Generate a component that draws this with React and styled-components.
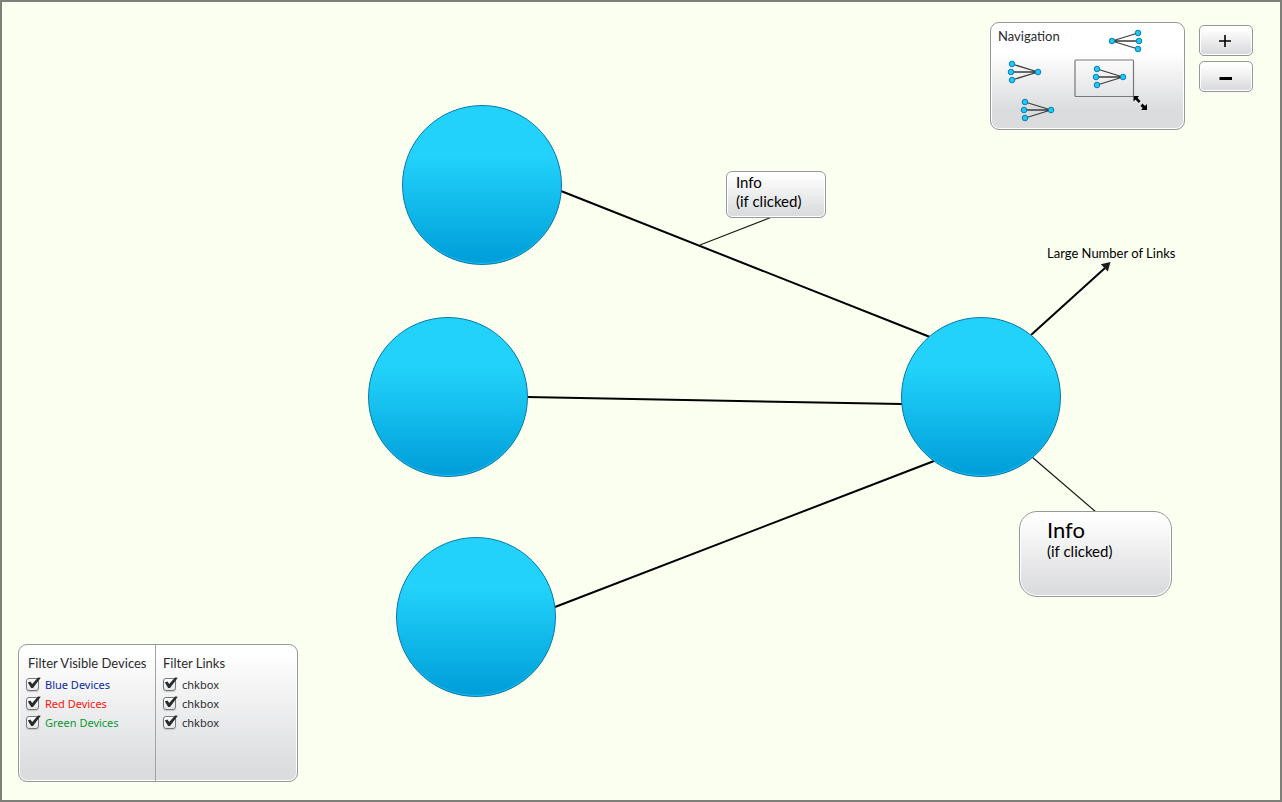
import React from "react";
import styled, { createGlobalStyle } from "styled-components";

const GlobalStyle = createGlobalStyle`
  *, *::before, *::after { box-sizing: border-box; }
  body {
    margin: 0;
    background: #fbfff0;
    color: #000;
    font: 13px/19px Lato, "Open Sans", sans-serif;
  }
`;

const Screen = styled.main`
  position: relative;
  display: flex;
  flex-direction: column;
  justify-content: space-between;
  min-height: 100vh;
  padding: 20px 27px 18px 16px;
  border: 2px solid #7e7f79;
  overflow: hidden;
`;

const Diagram = styled.section`
  position: absolute;
  inset: -2px;
`;

const Links = styled.svg`
  position: absolute;
  top: 0;
  left: 0;
  width: 100%;
  height: 100%;
`;

const Device = styled.button`
  position: absolute;
  left: ${(p) => p.$x}px;
  top: ${(p) => p.$y}px;
  width: 160px;
  height: 160px;
  padding: 0;
  border: 1px solid #0679ab;
  border-radius: 50%;
  background: linear-gradient(#22d2fa 32%, #009fda 97%);
  box-shadow: inset 0 -2px 1px -1px #1fc4f0;
  cursor: pointer;
`;

const Caption = styled.span`
  position: absolute;
  left: ${(p) => p.$x}px;
  top: ${(p) => p.$y}px;
  white-space: nowrap;
`;

const Panel = styled.div`
  border: 1px solid #96979a;
  border-radius: ${(p) => p.$radius || 9}px;
  background: linear-gradient(#fff ${(p) => p.$from || 5}%, #dbdcde ${(p) => p.$to || 92}%);
  box-shadow: inset 0 0 0 1px #fff;
`;

const InfoCard = styled(Panel)`
  position: absolute;
  left: ${(p) => p.$x}px;
  top: ${(p) => p.$y}px;
  width: ${(p) => (p.$large ? 153 : 100)}px;
  height: ${(p) => (p.$large ? 86 : 47)}px;
  padding: ${(p) => (p.$large ? "5px 27px" : "1px 9px")};
  font-size: 15px;
`;

const InfoTitle = styled.strong`
  display: block;
  font-weight: 400;
  font-size: ${(p) => (p.$large ? 22 : 15)}px;
  line-height: ${(p) => (p.$large ? 25 : 19)}px;
`;

const InfoNote = styled.span`
  display: block;
`;

const TopTools = styled.header`
  position: relative;
  display: flex;
  justify-content: flex-end;
  align-items: flex-start;
  gap: 14px;
`;

const NavigationPanel = styled(Panel)`
  position: relative;
  width: 195px;
  height: 108px;
  padding: 4px 7px;
`;

const Title = styled.h2`
  margin: 0;
  color: #2b2b2d;
  font-size: 13px;
  font-weight: 400;
  line-height: 19px;
  white-space: nowrap;
`;

const MiniMap = styled.svg`
  position: absolute;
  top: -1px;
  left: -1px;
`;

const ZoomControls = styled.div`
  display: flex;
  flex-direction: column;
  gap: 5px;
  padding-top: 3px;
`;

const ZoomButton = styled.button`
  display: grid;
  place-items: center;
  width: 54px;
  height: 31px;
  padding: 0;
  border: 1px solid #96979a;
  border-radius: 5px;
  background: linear-gradient(#fff 10%, #eeeeef 50%, #dbdcde 90%);
  box-shadow: inset 0 0 0 1px #fff;
  cursor: pointer;
`;

const FilterPanel = styled(Panel)`
  position: relative;
  display: flex;
  width: 280px;
  height: 138px;
`;

const FilterGroup = styled.fieldset`
  display: block;
  min-width: 0;
  margin: 0;
  padding: 9px 7px;
  border: 0;
  flex: ${(p) => (p.$wide ? "0 0 136px" : "1")};

  & + & { border-left: 1px solid #a3a4a6; }
`;

const FilterHeading = styled(Title)`
  padding-left: ${(p) => (p.$indent ? 2 : 0)}px;
  margin-bottom: 2px;
`;

const CheckLabel = styled.label`
  display: flex;
  align-items: center;
  gap: 4px;
  color: ${(p) => p.$color || "#2b2b2d"};
  font: 11px/19px "Noto Sans", "Open Sans", sans-serif;
  white-space: nowrap;
  cursor: pointer;
`;

const CheckBox = styled.span`
  position: relative;
  width: 15px;
  height: 15px;
`;

const CheckInput = styled.input`
  appearance: none;
  display: block;
  width: 13px;
  height: 13px;
  margin: 1px 0;
  border: 1px solid #77787a;
  border-radius: 3px;
  background: linear-gradient(#fff, #e4e5e6);
  box-shadow: 0 1px 1px #c4c5c7;

  &:not(:checked) + svg { display: none; }
`;

const Tick = styled.svg`
  position: absolute;
  top: 0;
  left: 0;
  pointer-events: none;
`;

const devices = [
  { x: 402, y: 105, name: "Device 1" },
  { x: 368, y: 317, name: "Device 2" },
  { x: 396, y: 537, name: "Device 3" },
  { x: 901, y: 317, name: "Hub device" },
];

const clusters = [
  { x: 21, y: 50 },
  { x: 106, y: 55 },
  { x: 34, y: 88 },
  { x: 149, y: 19, flip: true },
];

function Cluster({ x, y, flip }) {
  return (
    <g transform={`translate(${x} ${y}) scale(${flip ? -1 : 1} 1)`}>
      <path d="M1 -8L27 0M0 0H27M1 8L27 0" fill="none" stroke="#3c3c3e" strokeWidth="1.3" />
      <g fill="#1fc8f5" stroke="#0a7fb3">
        <circle cx="1" cy="-8" r="2.8" />
        <circle cx="0" cy="0" r="2.8" />
        <circle cx="1" cy="8" r="2.8" />
        <circle cx="27" cy="0" r="2.8" />
      </g>
    </g>
  );
}

function Check({ color, children }) {
  return (
    <CheckLabel $color={color}>
      <CheckBox>
        <CheckInput type="checkbox" defaultChecked />
        <Tick width="15" height="15" viewBox="0 0 15 15" aria-hidden="true">
          <path d="M1.8 5.4L4.400 4.400L6.200 7L12 .4L14.800 .8L7 11H5.200Z" fill="#2a2b2d" />
        </Tick>
      </CheckBox>
      {children}
    </CheckLabel>
  );
}

export default function App() {
  return (
    <>
      <GlobalStyle />
      <Screen>
        <Diagram aria-label="Device map">
          <Links aria-hidden="true">
            <g stroke="#000" strokeWidth="2">
              <path d="M561 191L930 337" />
              <path d="M527 397L902 404" />
              <path d="M555 607L934 461" />
              <path d="M1031 335L1105 268" />
            </g>
            <path d="M1110.500 262L1107.800 271.500L1100.800 264.300Z" fill="#1c1c1c" />
            <path d="M700 245L772 217M1032 457L1096 512" stroke="#1a1a1a" strokeWidth="1.2" />
          </Links>
          {devices.map((d) => (
            <Device key={d.name} type="button" aria-label={d.name} $x={d.x} $y={d.y} />
          ))}
          <Caption $x={1047} $y={244}>Large Number of Links</Caption>
          <InfoCard $x={726} $y={171} $radius={6}>
            <InfoTitle>Info</InfoTitle>
            <InfoNote>(if clicked)</InfoNote>
          </InfoCard>
          <InfoCard $x={1019} $y={511} $radius={18} $large>
            <InfoTitle $large>Info</InfoTitle>
            <InfoNote>(if clicked)</InfoNote>
          </InfoCard>
        </Diagram>

        <TopTools>
          <NavigationPanel $from={28} $to={82}>
            <Title>Navigation</Title>
            <MiniMap width="195" height="108" viewBox="0 0 195 108" aria-hidden="true">
              {clusters.map((c) => (
                <Cluster key={`${c.x}-${c.y}`} {...c} />
              ))}
              <rect x="85" y="38" width="58.500" height="36.500" rx="1" fill="none" stroke="#77787a" strokeWidth="1.2" />
              <path
                d="M143.500 74H149L147.500 76L150.500 79L148.800 81L145.500 77.500L143.500 79.500ZM157 88H151L152.800 86L150.500 84L152.500 81.500L155 84L157 82Z"
                fill="#000"
              />
            </MiniMap>
          </NavigationPanel>
          <ZoomControls>
            <ZoomButton type="button" aria-label="Zoom in">
              <svg width="14" height="14" viewBox="0 0 14 14" aria-hidden="true">
                <path d="M0 7H12M6 1V13" stroke="#000" strokeWidth="1.6" />
              </svg>
            </ZoomButton>
            <ZoomButton type="button" aria-label="Zoom out">
              <svg width="14" height="14" viewBox="0 0 14 14" aria-hidden="true">
                <path d="M.5 8.500H13" stroke="#000" strokeWidth="3" />
              </svg>
            </ZoomButton>
          </ZoomControls>
        </TopTools>

        <FilterPanel>
          <FilterGroup $wide aria-label="Filter Visible Devices">
            <FilterHeading $indent>Filter Visible Devices</FilterHeading>
            <Check color="#0a2b9c">Blue Devices</Check>
            <Check color="#fb140c">Red Devices</Check>
            <Check color="#0a9a2e">Green Devices</Check>
          </FilterGroup>
          <FilterGroup aria-label="Filter Links">
            <FilterHeading>Filter Links</FilterHeading>
            <Check>chkbox</Check>
            <Check>chkbox</Check>
            <Check>chkbox</Check>
          </FilterGroup>
        </FilterPanel>
      </Screen>
    </>
  );
}
